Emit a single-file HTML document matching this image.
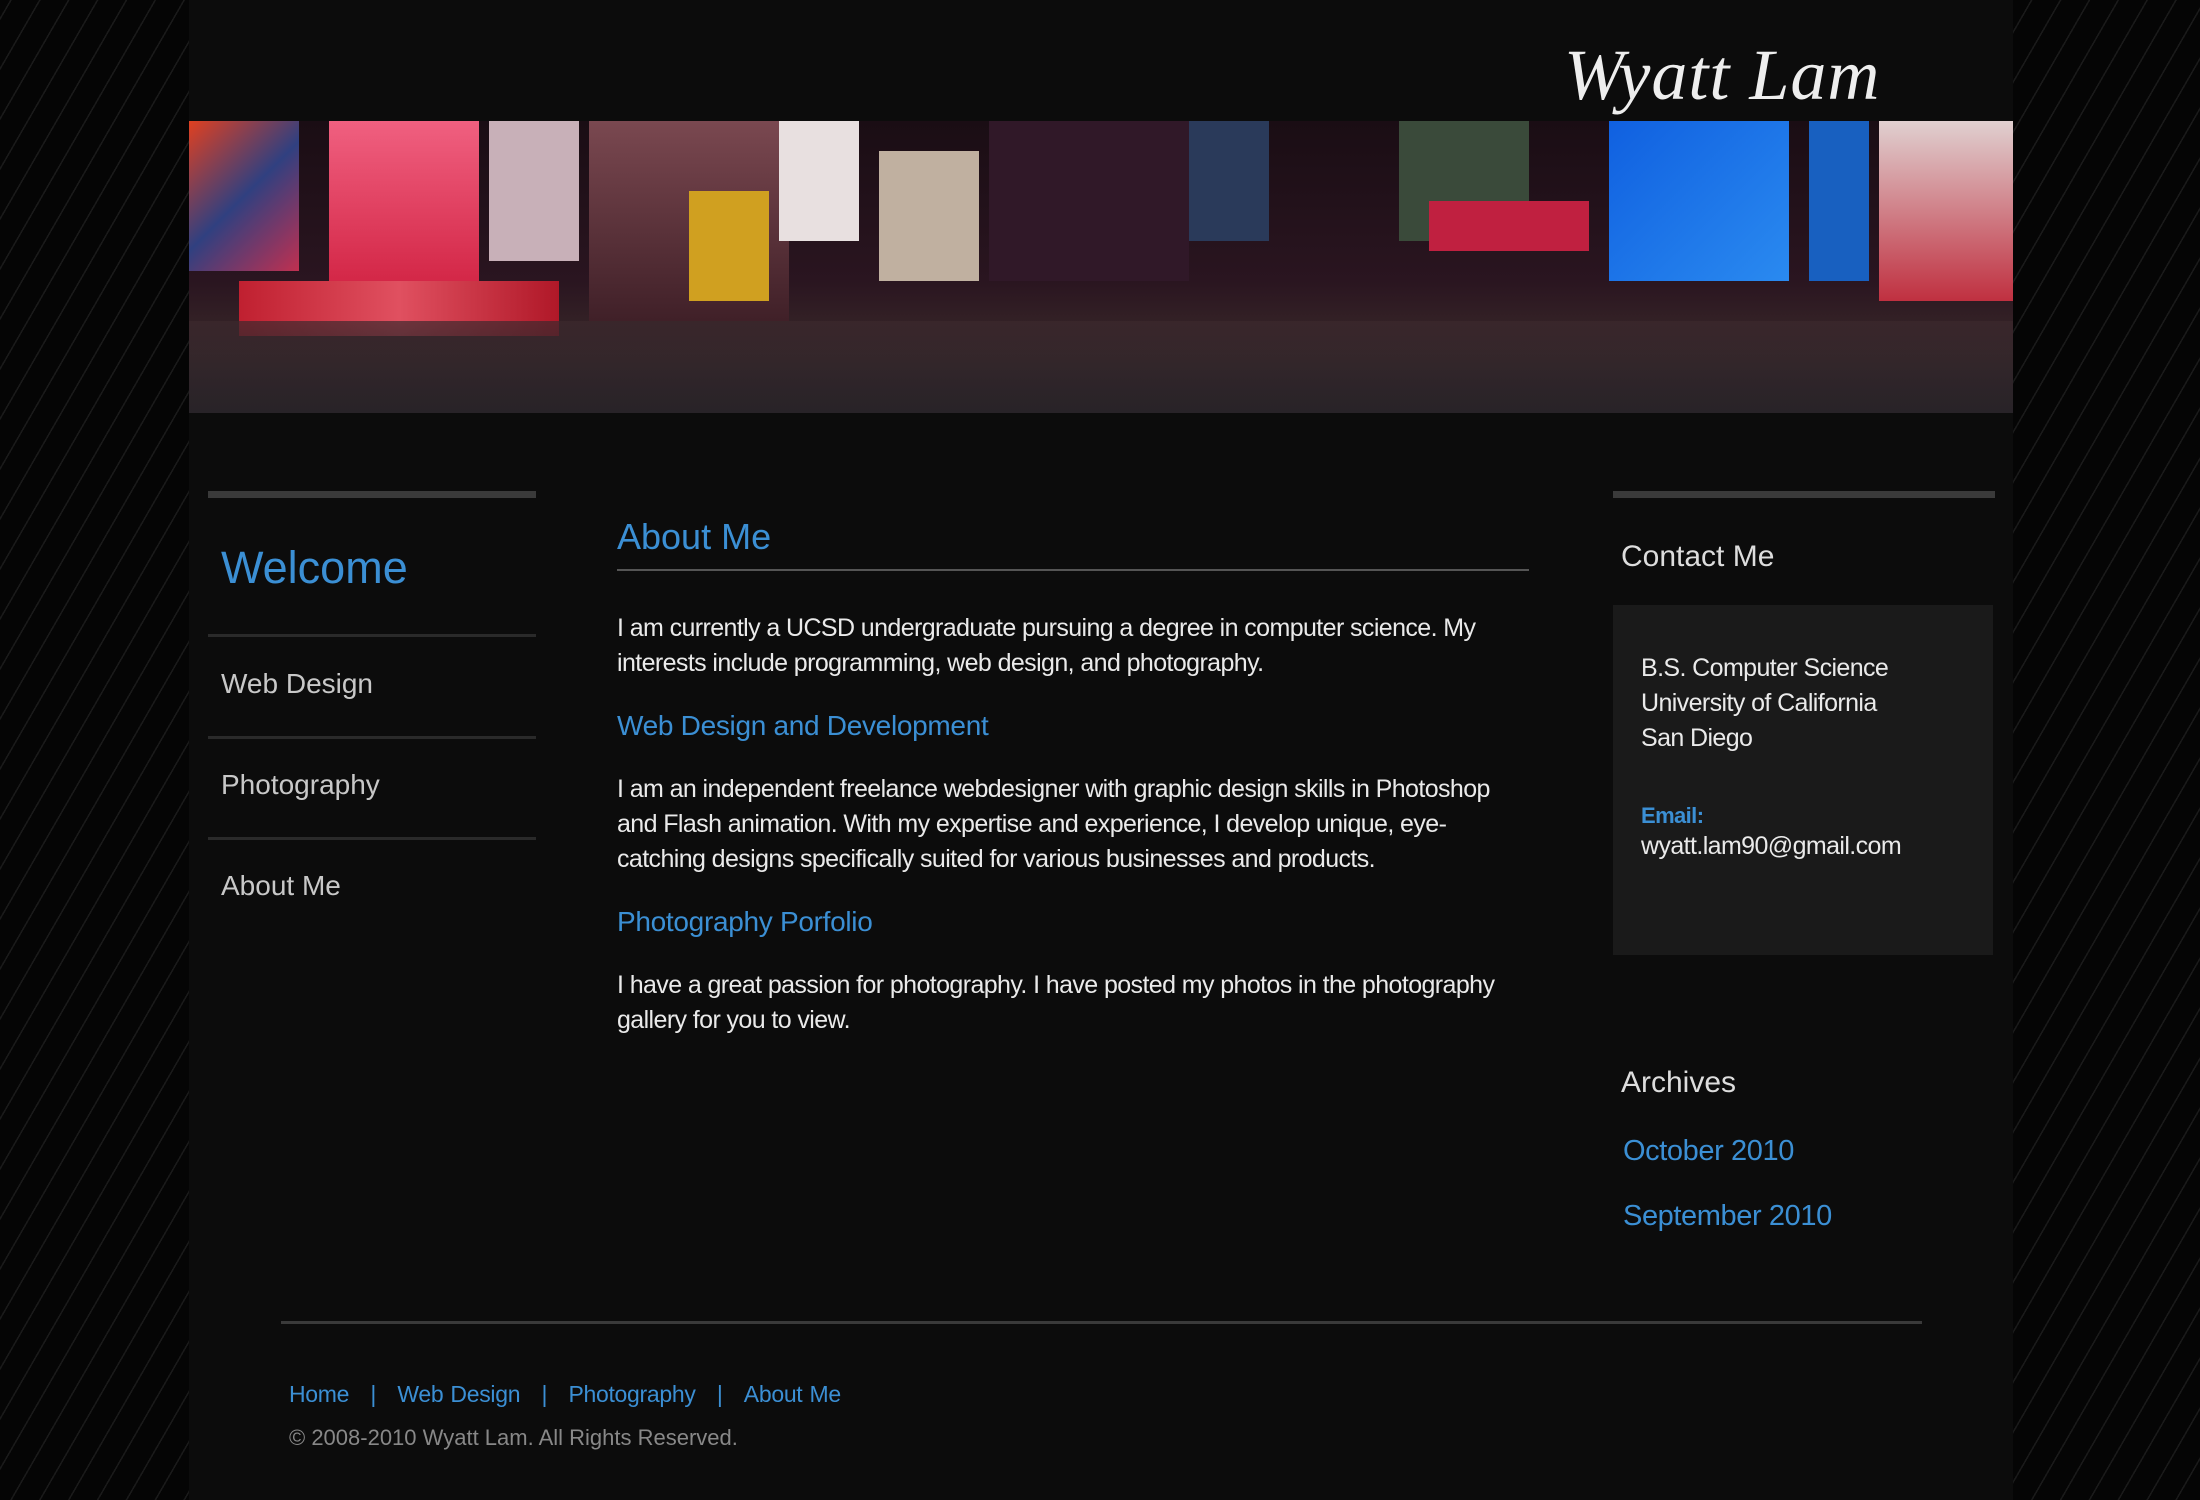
<!DOCTYPE html>
<html><head><meta charset="utf-8"><style>
*{margin:0;padding:0;box-sizing:border-box}
html,body{width:2200px;height:1500px;overflow:hidden}
body{background:#050505 repeating-linear-gradient(-60deg,#050505 0 20px,#1a1a1a 20px 21.5px,#050505 21.5px 25px);font-family:"Liberation Sans",sans-serif;position:relative}
#c{position:absolute;left:189px;top:0;width:1824px;height:1500px;background:#0c0c0c}
.a{position:absolute}
#logo{left:1375px;top:34px;font-family:"Liberation Serif",serif;font-style:italic;font-size:72px;color:#eee;letter-spacing:1px}
#ban{left:0;top:121px;width:1824px;height:292px;overflow:hidden;background:linear-gradient(180deg,#1a0d14 0%,#2a1520 55%,#3a2a2a 80%,#2a2226 100%)}
#ban div{position:absolute}
.gl{position:absolute;height:7px;background:#3a3a3a}
.nav{position:absolute;left:32px;font-size:28px;color:#c8c8c8}
.hr{position:absolute;left:19px;width:328px;height:3px;background:#2a2a2a}
.p{font-size:25px;line-height:35px;color:#eaeaea;letter-spacing:-0.6px}
.b{color:#3b8fd4}
.sh{font-size:28px;margin:29px 0 30px;letter-spacing:-0.3px}
</style></head><body>
<div id="c">
<div id="logo" class="a">Wyatt Lam</div>
<div id="ban" class="a">
 <div style="left:0;top:0;width:110px;height:150px;background:linear-gradient(135deg,#e04020,#304080,#c03050)"></div>
 <div style="left:140px;top:0;width:150px;height:180px;background:linear-gradient(#f06080,#d02040)"></div>
 <div style="left:300px;top:0;width:90px;height:140px;background:#c8b0b8"></div>
 <div style="left:50px;top:160px;width:320px;height:55px;background:linear-gradient(90deg,#c02030,#e05060,#b01828)"></div>
 <div style="left:400px;top:0;width:200px;height:200px;background:linear-gradient(#7a4850,#402028)"></div>
 <div style="left:500px;top:70px;width:80px;height:110px;background:#d0a020"></div>
 <div style="left:590px;top:0;width:80px;height:120px;background:#e8e0e0"></div>
 <div style="left:690px;top:30px;width:100px;height:130px;background:#c0b0a0"></div>
 <div style="left:800px;top:0;width:200px;height:160px;background:#301828"></div>
 <div style="left:1000px;top:0;width:80px;height:120px;background:#2a3a5a"></div>
 <div style="left:1210px;top:0;width:130px;height:120px;background:#3a4a3a"></div>
 <div style="left:1240px;top:80px;width:160px;height:50px;background:#c02040"></div>
 <div style="left:1420px;top:0;width:180px;height:160px;background:linear-gradient(135deg,#1060e0,#2a8af0)"></div>
 <div style="left:1620px;top:0;width:60px;height:160px;background:#1860c0"></div>
 <div style="left:1690px;top:0;width:134px;height:180px;background:linear-gradient(#e0d0d0,#c03040)"></div>
 <div style="left:0;top:200px;width:1824px;height:92px;background:linear-gradient(180deg,rgba(60,40,45,.7),rgba(40,35,40,.95))"></div>
</div>
<div class="gl" style="left:19px;top:491px;width:328px"></div>
<div class="a" style="left:32px;top:542px;font-size:45px;color:#3b8fd4">Welcome</div>
<div class="hr" style="top:634px"></div>
<div class="nav" style="top:668px">Web Design</div>
<div class="hr" style="top:736px"></div>
<div class="nav" style="top:769px">Photography</div>
<div class="hr" style="top:837px"></div>
<div class="nav" style="top:870px">About Me</div>

<div class="a" style="left:428px;top:516px;width:912px">
 <div class="b" style="font-size:36px;height:53px">About Me</div>
 <div style="height:2px;background:#555;margin-bottom:40px"></div>
 <div class="p">I am currently a UCSD undergraduate pursuing a degree in computer science. My interests include programming, web design, and photography.</div>
 <div class="b sh">Web Design and Development</div>
 <div class="p">I am an independent freelance webdesigner with graphic design skills in Photoshop and Flash animation. With my expertise and experience, I develop unique, eye-catching designs specifically suited for various businesses and products.</div>
 <div class="b sh">Photography Porfolio</div>
 <div class="p">I have a great passion for photography. I have posted my photos in the photography gallery for you to view.</div>
</div>

<div class="gl" style="left:1424px;top:491px;width:382px"></div>
<div class="a" style="left:1432px;top:540px;font-size:30px;color:#ddd">Contact Me</div>
<div class="a" style="left:1424px;top:605px;width:380px;height:350px;background:#1a1a1a;padding:46px 28px;color:#eaeaea;font-size:25px;line-height:35px;letter-spacing:-0.6px">
B.S. Computer Science<br>University of California<br>San Diego
<div style="margin-top:47px;color:#3b8fd4;font-weight:bold;font-size:22px;line-height:26px">Email:</div>
<div>wyatt.lam90@gmail.com</div>
</div>
<div class="a" style="left:1432px;top:1066px;font-size:30px;color:#ddd">Archives</div>
<div class="a b" style="left:1434px;top:1135px;font-size:29px;letter-spacing:-0.4px">October 2010</div>
<div class="a b" style="left:1434px;top:1200px;font-size:29px;letter-spacing:-0.4px">September 2010</div>

<div class="a" style="left:92px;top:1321px;width:1641px;height:3px;background:#3a3a3a"></div>
<div class="a b" style="left:100px;top:1381px;font-size:23px;letter-spacing:-0.3px;word-spacing:1px">Home &nbsp;&nbsp;| &nbsp;&nbsp;Web Design &nbsp;&nbsp;| &nbsp;&nbsp;Photography &nbsp;&nbsp;| &nbsp;&nbsp;About Me</div>
<div class="a" style="left:100px;top:1425px;font-size:22px;color:#888">© 2008-2010 Wyatt Lam. All Rights Reserved.</div>
</div>
</body></html>
